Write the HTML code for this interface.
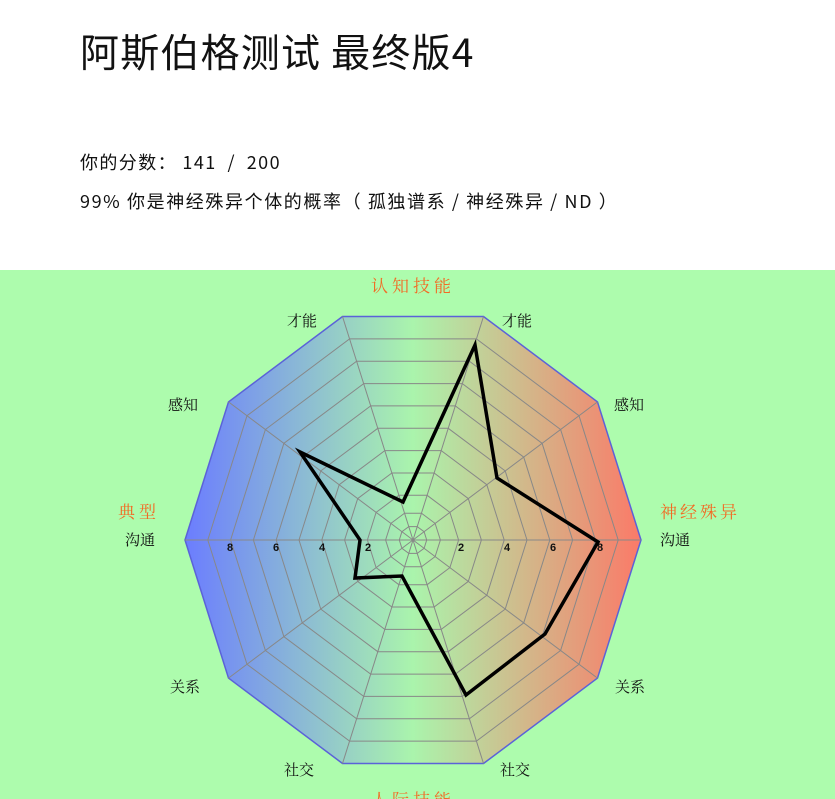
<!DOCTYPE html>
<html><head><meta charset="utf-8"><style>
body{margin:0;background:#fff;width:835px;height:799px;overflow:hidden;font-family:"Noto Sans CJK SC","Liberation Sans",sans-serif;color:#111}
h1{position:absolute;left:80px;top:25px;margin:0;font-weight:normal;font-size:39px;letter-spacing:1.2px;line-height:52px;white-space:nowrap}
.p{position:absolute;left:80px;font-size:18px;letter-spacing:1.6px;line-height:24px;white-space:nowrap}
svg{position:absolute;left:0;top:270px}
</style></head><body>
<h1>阿斯伯格测试 最终版4</h1>
<div class="p" style="top:150px;letter-spacing:1.4px">你的分数： 141 &nbsp;/ &nbsp;200</div>
<div class="p" style="top:189px">99% 你是神经殊异个体的概率（ 孤独谱系 / 神经殊异 / ND ）</div>
<svg width="835" height="529" viewBox="0 270 835 529" font-family="'Noto Serif CJK SC',serif">
<defs><linearGradient id="g" x1="185" x2="641" y1="0" y2="0" gradientUnits="userSpaceOnUse">
<stop offset="0" stop-color="#6b7dff"/><stop offset="0.5" stop-color="#aaf4ac"/><stop offset="1" stop-color="#fb7a68"/></linearGradient></defs>
<rect x="0" y="270" width="835" height="529" fill="#adfcad"/>
<g id="c"></g>
<text x="413" y="292" text-anchor="middle" fill="#f26a24" font-size="17" letter-spacing="4">认知技能</text>
<text x="413" y="806" text-anchor="middle" fill="#f26a24" font-size="17" letter-spacing="4">人际技能</text>
<text x="118" y="518" fill="#f26a24" font-size="17" letter-spacing="4">典型</text>
<text x="660" y="518" fill="#f26a24" font-size="17" letter-spacing="3">神经殊异</text>
<g font-size="15" fill="#111">
<text x="287" y="326">才能</text><text x="502" y="326">才能</text>
<text x="168" y="410">感知</text><text x="614" y="410">感知</text>
<text x="125" y="545">沟通</text><text x="660" y="545">沟通</text>
<text x="170" y="692">关系</text><text x="615" y="692">关系</text>
<text x="284" y="775">社交</text><text x="500" y="775">社交</text>
</g>
<g font-size="11" font-weight="bold" font-family="'Liberation Sans',sans-serif" text-anchor="middle" fill="#111">
<text x="230" y="551">8</text><text x="276" y="551">6</text><text x="322" y="551">4</text><text x="368" y="551">2</text>
<text x="461" y="551">2</text><text x="507" y="551">4</text><text x="553" y="551">6</text><text x="600" y="551">8</text>
</g>
<polygon points="475,345 497,478 598,542 545,634 466,695 402,576 355,578 360,540 300,452 403,502" fill="none" stroke="#000" stroke-width="3.5" stroke-linejoin="miter"/>
</svg>
<script>
var g=document.getElementById('c'),cx=413,cy=540,rx=228,ry=235,h='';
function pts(f){var a=[];for(var i=0;i<10;i++){var t=i*Math.PI/5;a.push((cx+rx*f*Math.cos(t)).toFixed(1)+','+(cy-ry*f*Math.sin(t)).toFixed(1));}return a;}
h+='<polygon points="'+pts(1).join(' ')+'" fill="url(#g)" stroke="#5b62d8" stroke-width="1.5"/>';
[0.06,0.12,0.2,0.3,0.4,0.5,0.6,0.7,0.8,0.9].forEach(function(f){h+='<polygon points="'+pts(f).join(' ')+'" fill="none" stroke="#888" stroke-width="1"/>';});
pts(1).forEach(function(p){h+='<line x1="'+cx+'" y1="'+cy+'" x2="'+p.split(',')[0]+'" y2="'+p.split(',')[1]+'" stroke="#888" stroke-width="1"/>';});
g.innerHTML=h;
</script>
</body></html>
